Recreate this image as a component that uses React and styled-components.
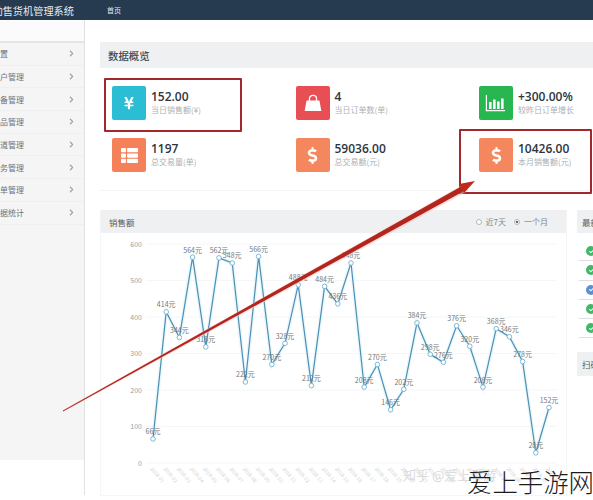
import React from 'react';
import styled, { createGlobalStyle } from 'styled-components';
import { FaYenSign, FaDollarSign, FaThList, FaCheck, FaChevronRight } from 'react-icons/fa';

const Global = createGlobalStyle`
  html, body { margin: 0; padding: 0; background: #fff; }
  #root { width: 593px; height: 500px; overflow: hidden; }
  * { box-sizing: border-box; }
`;

const CJK = `"Noto Sans CJK SC", "Noto Sans", sans-serif`;

const Page = styled.div`
  position: relative;
  width: 593px;
  height: 500px;
  overflow: hidden;
  display: flex;
  flex-direction: column;
  font-family: ${CJK};
  background: #fff;
`;
const TopBar = styled.header`
  flex: 0 0 20px;
  display: flex;
  align-items: center;
  background: #263a50;
  color: #e6ebef;
`;
const Brand = styled.div`
  flex: 0 0 74px;
  display: flex;
  justify-content: flex-end;
  overflow: hidden;
  white-space: nowrap;
  font-size: 10.2px;
`;
const NavLink = styled.a`
  margin-left: 33px;
  font-size: 7px;
`;
const Body = styled.div`
  flex: 1;
  display: flex;
  min-height: 0;
`;
const Side = styled.aside`
  flex: 0 0 85px;
  height: 475px;
  border-right: 1px solid #dfe1e2;
  display: flex;
  flex-direction: column;
  background: linear-gradient(#f5f5f5, #f5f5f5) 0 0 / 84px 440px no-repeat;
`;
const SideTop = styled.div`
  flex: 0 0 23px;
  background: #fbfbfb;
  border-bottom: 2px solid #e4e5e6;
`;
const SideItem = styled.div`
  flex: 0 0 22.7px;
  display: flex;
  align-items: center;
  justify-content: space-between;
  padding-right: 9px;
  font-size: 8px;
  color: #6d7378;
  border-bottom: 1px solid #efefef;
  overflow: hidden;
  svg { color: #9a9fa4; font-size: 7px; }
`;
const SideLabel = styled.span`
  margin-left: -8px;
  white-space: nowrap;
`;
const Main = styled.main`
  flex: 1;
  min-width: 0;
  display: flex;
  flex-direction: column;
  padding: 22px 0 0 15px;
`;
const Heading = styled.div`
  display: flex;
  align-items: center;
  justify-content: space-between;
  height: ${p => p.$h}px;
  padding: 0 18px 0 ${p => p.$pl || 8}px;
  background: #eef0f1;
  color: ${p => p.$big ? '#3f4c57' : '#555c62'};
  font-size: ${p => p.$big ? 10.4 : 8.5}px;
  font-weight: ${p => p.$big ? 500 : 400};
  white-space: nowrap;
  overflow: hidden;
`;
const Overview = styled.section`
  flex: 0 0 149px;
  width: 520px;
  border-bottom: 1px solid #f3f4f4;
`;
const StatGrid = styled.div`
  display: grid;
  grid-template-columns: repeat(3, 183.5px);
  grid-auto-rows: 52px;
  padding: 18px 0 0 12px;
`;
const Stat = styled.div`
  display: flex;
  gap: 5px;
  align-items: flex-start;
`;
const IconTile = styled.div`
  flex: 0 0 34px;
  height: 34px;
  border-radius: 2px;
  background: ${p => p.$bg};
  color: #fff;
  display: flex;
  align-items: center;
  justify-content: center;
  font-size: ${p => p.$size || 17}px;
`;
const StatText = styled.div`
  display: flex;
  flex-direction: column;
  padding-top: 3px;
`;
const Value = styled.span`
  font-family: "Open Sans", sans-serif;
  font-size: 12px;
  font-weight: 600;
  line-height: 15px;
  color: #2b3440;
`;
const Caption = styled.span`
  font-size: 8px;
  line-height: 12px;
  color: #adb0b3;
  white-space: nowrap;
`;
const Lower = styled.section`
  flex: 0 0 auto;
  margin-top: 19px;
  display: flex;
  gap: 10px;
`;
const ChartPanel = styled.div`
  flex: 0 0 466px;
  border: 1px solid #f4f6f6;
  border-top: 0;
`;
const Radios = styled.div`
  display: flex;
  align-items: center;
  color: #85898c;
  font-size: 8px;
`;
const Radio = styled.i`
  width: 6px;
  height: 6px;
  border-radius: 50%;
  border: 1px solid #b4b8ba;
  margin: 0 4px 0 ${p => p.$gap || 0}px;
  background: ${p => p.$on ? 'radial-gradient(#666 0 1.3px, #fff 1.6px)' : '#fff'};
`;
const ChartSvg = styled.svg`
  display: block;
`;
const SidePanel = styled.div`
  flex: 0 0 40px;
`;
const FeedList = styled.div`
  display: flex;
  flex-direction: column;
  padding: 9px 0 0 2px;
  margin-bottom: 14px;
`;
const FeedRow = styled.div`
  height: 19.3px;
  display: flex;
  align-items: center;
  padding-left: 7px;
  border-bottom: 1px solid #dcdedf;
`;
const Dot = styled.span`
  width: 10px;
  height: 10px;
  border-radius: 50%;
  background: ${p => p.$bg};
  color: #fff;
  font-size: 5px;
  display: flex;
  align-items: center;
  justify-content: center;
`;
const RedBox = styled.div`
  position: absolute;
  left: ${p => p.$x}px;
  top: ${p => p.$y}px;
  width: ${p => p.$w}px;
  height: ${p => p.$h}px;
  border: 2px solid #a3282c;
  border-radius: 1px;
`;
const ArrowLayer = styled.svg`
  position: absolute;
  left: 0;
  top: 0;
  pointer-events: none;
`;
const FaintMark = styled.div`
  position: absolute;
  left: 403px;
  top: 465px;
  font-size: 13px;
  color: #dcdcdc;
  white-space: nowrap;
`;
const SiteMark = styled.div`
  position: absolute;
  left: 467px;
  top: 463px;
  font-size: 25.4px;
  line-height: 36px;
  font-weight: 300;
  color: #1c1c1c;
  white-space: nowrap;
`;

const Bag = () => (
  <svg width="20" height="20" viewBox="0 0 20 20" fill="#fff">
    <path d="M6.5 8V5.5C6.5 3.6 8 2.4 10 2.4s3.500 1.200 3.500 3.100V8" fill="none" stroke="#fff" strokeWidth="1.300" />
    <path d="M3.600 7.500h12.800l2 10.500H1.600z" />
  </svg>
);
const Bars = () => (
  <svg width="22" height="20" viewBox="0 0 22 20" fill="#fff">
    <path d="M2 2v15h18v1.300H.8V2z" />
    <rect x="4" y="9" width="2.600" height="7" />
    <rect x="8" y="6.500" width="2.600" height="9.500" />
    <rect x="12" y="8.500" width="2.600" height="7.500" />
    <rect x="16" y="5.500" width="2.600" height="10.500" />
  </svg>
);

const menu = ['设置', '用户管理', '设备管理', '商品管理', '货道管理', '财务管理', '订单管理', '数据统计'];
const stats = [
  { bg: '#2bbdd3', size: 14, icon: <FaYenSign />, value: '152.00', caption: '当日销售额(¥)' },
  { bg: '#e84f55', icon: <Bag />, value: '4', caption: '当日订单数(单)' },
  { bg: '#27b650', icon: <Bars />, value: '+300.00%', caption: '较昨日订单增长' },
  { bg: '#f5815a', icon: <FaThList />, value: '1197', caption: '总交易量(单)' },
  { bg: '#f5875f', icon: <FaDollarSign />, value: '59036.00', caption: '总交易额(元)' },
  { bg: '#f5875f', icon: <FaDollarSign />, value: '10426.00', caption: '本月销售额(元)' },
];
const data = [66, 414, 344, 564, 318, 562, 548, 222, 566, 270, 328, 488, 212, 484, 436, 548, 208, 270, 146, 202, 384, 298, 276, 376, 320, 208, 368, 346, 278, 28, 152];
const px = i => 52 + 13.2 * i;
const py = v => 230 - v * 0.365;
const line = data.map((v, i) => `${px(i)},${py(v)}`).join(' ');

const Chart = () => (
  <ChartSvg width="465" height="262" viewBox="0 0 465 262">
    {[0, 100, 200, 300, 400, 500, 600].map(t => (
      <g key={t}>
        <line x1="45" x2="455" y1={py(t)} y2={py(t)} stroke="#f4f6f7" />
        <text x="41" y={py(t) + 2.500} textAnchor="end" fontSize="7" fill="#9a9da0">{t}</text>
      </g>
    ))}
    {data.map((_, i) => (
      <text key={i} x={px(i) - 3} y="236" fontSize="5" fill="#cfd2d4" transform={`rotate(50 ${px(i) - 3} 236)`}>
        {`2018-${String(i + 1).padStart(2, '0')}`}
      </text>
    ))}
    <polyline points={line} fill="none" stroke="#ecf7fc" strokeWidth="4" />
    <polyline points={line} fill="none" stroke="#4b8fb4" strokeWidth="1.200" />
    {data.map((v, i) => (
      <g key={i}>
        <circle cx={px(i)} cy={py(v)} r="2.300" fill="#fff" stroke="#72b2d0" strokeWidth="0.900" />
        <text x={px(i)} y={py(v) - 4.500} textAnchor="middle" fontSize="7" fill="#74787b">{v}元</text>
      </g>
    ))}
  </ChartSvg>
);

export default function App() {
  return (
    <Page>
      <Global />
      <TopBar>
        <Brand>自动售货机管理系统</Brand>
        <NavLink>首页</NavLink>
      </TopBar>
      <Body>
        <Side>
          <SideTop />
          {menu.map(m => (
            <SideItem key={m}>
              <SideLabel>{m}</SideLabel>
              <FaChevronRight />
            </SideItem>
          ))}
        </Side>
        <Main>
          <Overview>
            <Heading $h={26} $big>数据概览</Heading>
            <StatGrid>
              {stats.map(s => (
                <Stat key={s.caption}>
                  <IconTile $bg={s.bg} $size={s.size}>{s.icon}</IconTile>
                  <StatText>
                    <Value>{s.value}</Value>
                    <Caption>{s.caption}</Caption>
                  </StatText>
                </Stat>
              ))}
            </StatGrid>
          </Overview>
          <Lower>
            <ChartPanel>
              <Heading $h={23}>
                销售额
                <Radios>
                  <Radio />近7天
                  <Radio $on $gap={8} />一个月
                </Radios>
              </Heading>
              <Chart />
            </ChartPanel>
            <SidePanel>
              <Heading $h={23} $pl={5}>最新动态</Heading>
              <FeedList>
                {['#3fb868', '#3fb868', '#5b8fd6', '#3fb868', '#3fb868'].map((c, i) => (
                  <FeedRow key={i}><Dot $bg={c}><FaCheck /></Dot></FeedRow>
                ))}
              </FeedList>
              <Heading $h={24} $pl={5}>扫码支付</Heading>
            </SidePanel>
          </Lower>
        </Main>
      </Body>
      <RedBox $x={104} $y={78} $w={138} $h={54} />
      <RedBox $x={459} $y={129} $w={133} $h={65} />
      <ArrowLayer width="593" height="500" viewBox="0 0 593 500">
        <polygon points="63,410 464,184 468,191 63,412" fill="#f7c9c2" opacity=".55" />
        <polygon points="63,410.600 462,186 465,190.500 63,411.400" fill="#b3261e" />
        <polygon points="475,181 459,184 464,193" fill="#c0271d" />
      </ArrowLayer>
      <FaintMark>知乎 @爱上手游</FaintMark>
      <SiteMark>爱上手游网</SiteMark>
    </Page>
  );
}
